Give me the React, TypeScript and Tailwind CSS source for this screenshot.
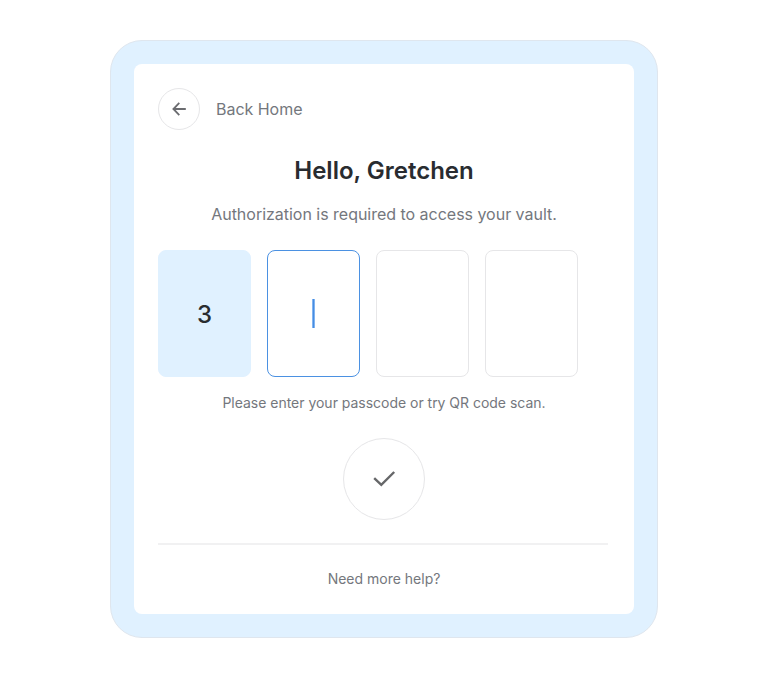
const boxes = ["3", "active", "", ""];

export default function App() {
  return (
    <div className="flex h-[678px] w-[768px] justify-center bg-white pt-10 font-['Inter',sans-serif]">
      <main className="h-[598px] w-[548px] rounded-[32px] border border-[#dfe6ee] bg-[#e0f1ff] p-[23px]">
        <section className="flex h-[550px] flex-col items-center rounded-lg bg-white px-6 pt-6 text-[#74777d]">
          <a className="flex h-[42px] items-center gap-4 self-stretch text-base tracking-[-0.03px]">
            <span className="flex size-[42px] items-center justify-center rounded-full border border-[#e6e6e8]">
              <svg width="18" height="18" viewBox="0 0 18 18" fill="none" stroke="#6b6c70" strokeWidth="1.8">
                <path d="M15.8 9H3.5M9.3 2.9L3.4 9l5.9 6.1" />
              </svg>
            </span>
            Back Home
          </a>
          <h1 className="mt-[25px] h-8 text-2xl leading-8 font-semibold text-[#292c30]">Hello, Gretchen</h1>
          <p className="mt-[15px] h-6 text-base leading-6 tracking-[-0.02px]">Authorization is required to access your vault.</p>
          <div className="mt-6 flex gap-4 self-start">
            {boxes.map((value, i) => (
              <div
                key={i}
                className={`flex h-[127px] w-[93px] items-center justify-center rounded-lg border text-2xl font-medium text-[#292c30] ${
                  i === 0 ? "border-[#e0f1ff] bg-[#e0f1ff] pt-0.5" : i === 1 ? "border-[#4b91e2]" : "border-[#e6e6e8]"
                }`}
              >
                {i === 1 ? <span className="h-[29px] w-[3px] border-x border-[#81b5f2] bg-[#488ce0]" /> : value}
              </div>
            ))}
          </div>
          <p className="mt-4 h-5 text-sm leading-5 tracking-[-0.02px]">Please enter your passcode or try QR code scan.</p>
          <button className="mt-[25px] flex size-[82px] shrink-0 items-center justify-center rounded-full border border-[#e6e6e8]">
            <svg width="32" height="32" viewBox="0 0 32 32" fill="none" stroke="#666769" strokeWidth="2.4">
              <path d="M6.2 15.2l7.1 6.7L26.2 9" />
            </svg>
          </button>
          <hr className="mt-[23px] h-0.5 w-[450px] self-start border-0 bg-[#f1f1f2]" />
          <a className="mt-6 text-sm leading-5">Need more help?</a>
        </section>
      </main>
    </div>
  );
}
